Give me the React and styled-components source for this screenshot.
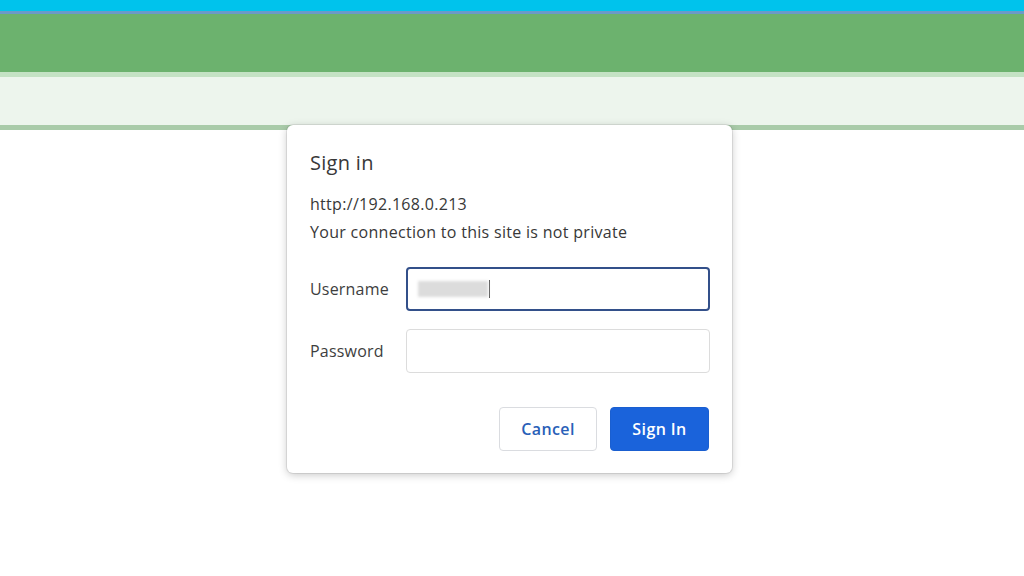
import React from "react";
import styled, { createGlobalStyle } from "styled-components";

const GlobalStyle = createGlobalStyle`
  html, body {
    margin: 0;
    padding: 0;
    background: #ffffff;
  }
  body {
    font-family: "Open Sans", "Liberation Sans", Arial, sans-serif;
  }
`;

const Page = styled.div`
  position: relative;
  width: 1024px;
  height: 576px;
  overflow: hidden;
  background: #ffffff;
`;

const Band = styled.div`
  height: ${(p) => p.h}px;
  background: ${(p) => p.bg};
`;

const Dialog = styled.div`
  position: absolute;
  left: 287px;
  top: 125px;
  width: 445px;
  height: 348px;
  box-sizing: border-box;
  padding: 24px 22px 0 23px;
  background: #ffffff;
  border-radius: 6px;
  box-shadow: 0 0 0 1px rgba(0, 0, 0, 0.08), 0 2px 8px rgba(0, 0, 0, 0.22);
  color: #3c3c3c;
`;

const Title = styled.h2`
  margin: 0 0 13px;
  font-size: 20px;
  font-weight: 400;
  letter-spacing: 0.3px;
  color: #383838;
  line-height: 28px;
`;

const Info = styled.p`
  margin: 0;
  font-size: 16px;
  letter-spacing: 0.3px;
  line-height: 28px;
  color: #383838;
`;

const Fields = styled.div`
  display: grid;
  grid-template-columns: 96px 304px;
  row-gap: 18px;
  align-items: center;
  margin-top: 21px;
`;

const Label = styled.label`
  font-size: 16px;
  letter-spacing: 0.2px;
  color: #3e3e3e;
`;

const Input = styled.div`
  position: relative;
  height: 44px;
  box-sizing: border-box;
  border: ${(p) => (p.focused ? "2px solid #33508a" : "1px solid #dcdcdc")};
  border-radius: 4px;
  background: #ffffff;
  display: flex;
  align-items: center;
  padding-left: 10px;
`;

const Blurred = styled.span`
  display: inline-block;
  width: 70px;
  height: 16px;
  background: #dcdcdc;
  filter: blur(1.5px);
`;

const Caret = styled.span`
  display: inline-block;
  width: 1px;
  height: 18px;
  margin-left: 1px;
  background: #555555;
`;

const Actions = styled.div`
  display: flex;
  justify-content: flex-end;
  gap: 13px;
  margin-top: 34px;
  padding-right: 1px;
`;

const Button = styled.button`
  height: 44px;
  width: ${(p) => (p.primary ? 99 : 98)}px;
  border-radius: 4px;
  font-family: inherit;
  font-size: 16px;
  font-weight: 600;
  letter-spacing: 0.4px;
  cursor: pointer;
  border: ${(p) => (p.primary ? "1px solid #1a5fd0" : "1px solid #dadce0")};
  background: ${(p) => (p.primary ? "#1a63db" : "#ffffff")};
  color: ${(p) => (p.primary ? "#ffffff" : "#2a5fb8")};
`;

export default function App() {
  return (
    <Page>
      <GlobalStyle />
      <Band h={11} bg="#00c3ec" />
      <Band h={3} bg="#6b9ac8" />
      <Band h={58} bg="#6cb26e" />
      <Band h={5} bg="#c4e2c4" />
      <Band h={48} bg="#edf5ed" />
      <Band h={5} bg="#a9cba9" />

      <Dialog role="dialog">
        <Title>Sign in</Title>
        <Info>http://192.168.0.213</Info>
        <Info>Your connection to this site is not private</Info>

        <Fields>
          <Label>Username</Label>
          <Input focused>
            <Blurred />
            <Caret />
          </Input>
          <Label>Password</Label>
          <Input />
        </Fields>

        <Actions>
          <Button>Cancel</Button>
          <Button primary>Sign In</Button>
        </Actions>
      </Dialog>
    </Page>
  );
}
